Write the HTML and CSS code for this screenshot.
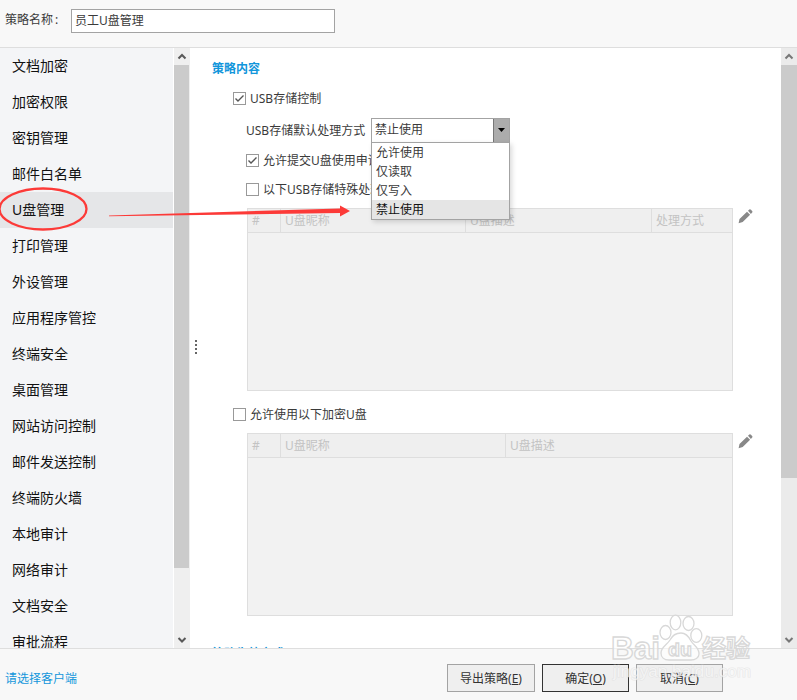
FILE: index.html
```html
<!DOCTYPE html>
<html lang="zh-CN">
<head>
<meta charset="utf-8">
<title>员工U盘管理</title>
<link rel="stylesheet" href="styles.css">
</head>
<body>
<div class="window">
  <header class="topbar">
    <label class="topbar-label" for="name">策略名称<span class="colon">:</span></label>
    <input class="name-input" id="name" type="text" value="员工U盘管理">
  </header>

  <div class="main">
    <nav class="sidebar">
      <div class="nav-item">文档加密</div>
      <div class="nav-item">加密权限</div>
      <div class="nav-item">密钥管理</div>
      <div class="nav-item">邮件白名单</div>
      <div class="nav-item active">U盘管理</div>
      <div class="nav-item">打印管理</div>
      <div class="nav-item">外设管理</div>
      <div class="nav-item">应用程序管控</div>
      <div class="nav-item">终端安全</div>
      <div class="nav-item">桌面管理</div>
      <div class="nav-item">网站访问控制</div>
      <div class="nav-item">邮件发送控制</div>
      <div class="nav-item">终端防火墙</div>
      <div class="nav-item">本地审计</div>
      <div class="nav-item">网络审计</div>
      <div class="nav-item">文档安全</div>
      <div class="nav-item">审批流程</div>
    </nav>
    <div class="scrollbar side-scroll">
      <svg class="arrow" viewBox="0 0 16 17"><path d="M4.5 10.5 8 7l3.5 3.5"/></svg>
      <div class="thumb"></div>
      <svg class="arrow" viewBox="0 0 16 17"><path d="M4.5 7 8 10.5 11.5 7"/></svg>
    </div>
    <div class="splitter"><i></i><i></i><i></i><i></i></div>

    <section class="content">
      <h2 class="title">策略内容</h2>
      <div class="check-row storage"><span class="box"><svg viewBox="0 0 13 13"><path d="M2.5 6.500 5 9l5.500-5.500"/></svg></span><span class="check-text">USB存储控制</span></div>
      <div class="field-row">
        <span class="field-label">USB存储默认处理方式</span>
        <div class="select">
          <div class="select-value">禁止使用</div>
          <div class="select-button"><svg viewBox="0 0 8 4"><path d="M0 0h7L3.500 4z"/></svg></div>
          <div class="menu">
            <div class="option">允许使用</div>
            <div class="option">仅读取</div>
            <div class="option">仅写入</div>
            <div class="option chosen">禁止使用</div>
          </div>
        </div>
      </div>
      <div class="check-row nested apply"><span class="box"><svg viewBox="0 0 13 13"><path d="M2.5 6.500 5 9l5.500-5.500"/></svg></span><span class="check-text">允许提交U盘使用申请</span></div>
      <div class="check-row nested special"><span class="box"></span><span class="check-text">以下USB存储特殊处理</span></div>
      <div class="table-row">
        <div class="table">
          <div class="thead usb-cols"><span>#</span><span>U盘昵称</span><span>U盘描述</span><span>处理方式</span></div>
        </div>
        <svg class="pencil" viewBox="0 0 15 15"><path d="M.6 14.200 1.500 10 9 2.700l3.100 3.100L4.700 13zM10 1.800 11.300.6q.8-.7 1.700.2l1.100 1.100q.8.8 0 1.700L12.900 4.900z"/></svg>
      </div>
      <div class="check-row encrypted"><span class="box"></span><span class="check-text">允许使用以下加密U盘</span></div>
      <div class="table-row">
        <div class="table">
          <div class="thead enc-cols"><span>#</span><span>U盘昵称</span><span>U盘描述</span></div>
        </div>
        <svg class="pencil" viewBox="0 0 15 15"><path d="M.6 14.200 1.500 10 9 2.700l3.100 3.100L4.700 13zM10 1.800 11.300.6q.8-.7 1.700.2l1.100 1.100q.8.8 0 1.700L12.900 4.900z"/></svg>
      </div>
      <h2 class="title next-title">策略生效方式</h2>
    </section>
    <div class="scrollbar main-scroll">
      <svg class="arrow" viewBox="0 0 16 17"><path d="M4.5 10.5 8 7l3.5 3.5"/></svg>
      <div class="thumb"></div>
      <svg class="arrow" viewBox="0 0 16 17"><path d="M4.5 7 8 10.5 11.5 7"/></svg>
    </div>
  </div>

  <footer class="bottombar">
    <a class="client-link">请选择客户端</a>
    <div class="actions">
      <button class="btn export">导出策略(<u>E</u>)</button>
      <button class="btn primary">确定(<u>O</u>)</button>
      <button class="btn">取消(<u>C</u>)</button>
    </div>
  </footer>

  <svg class="annotation" viewBox="0 0 360 60">
    <ellipse cx="43" cy="29" rx="43.5" ry="20.5"/>
    <path d="M109 35.500 340 28.500V25.500L350 31l-10 5.500V33L109 36.300z"/>
  </svg>

  <svg class="watermark" viewBox="0 0 150 76">
    <g class="mark">
      <text x="0" y="46" class="wm-name" textLength="49" lengthAdjust="spacingAndGlyphs">Bai</text>
      <ellipse cx="54.500" cy="19.500" rx="5.500" ry="7"/>
      <ellipse cx="64.500" cy="9.500" rx="5.300" ry="7.300"/>
      <ellipse cx="77.500" cy="10.500" rx="5.500" ry="7"/>
      <ellipse cx="85.300" cy="22.500" rx="5.500" ry="6.800"/>
      <path d="M70 20c5 0 8 4 10 8 3 5 8 6 8 13 0 4-4 6-8 6H58c-5 0-8-3-8-7 0-6 6-8 9-13 2-4 6-7 11-7z"/>
      <text x="57" y="42.500" class="wm-du" textLength="24" lengthAdjust="spacingAndGlyphs">du</text>
      <text x="91" y="44" class="wm-cn" textLength="48" lengthAdjust="spacingAndGlyphs">经验</text>
    </g>
    <text x="2" y="64" class="wm-url" textLength="138" lengthAdjust="spacingAndGlyphs">jingyan.baidu.com</text>
  </svg>
</div>
</body>
</html>
```

FILE: styles.css
```css
* { box-sizing: border-box; }

body {
  margin: 0;
  font: 12px/18px "Noto Sans", "Noto Sans CJK SC", sans-serif;
  color: #3a3a3a;
}

.window {
  position: relative;
  width: 797px;
  height: 700px;
  overflow: hidden;
  display: flex;
  flex-direction: column;
  background: #f8f8f8;
}

.topbar {
  flex: none;
  height: 48px;
  display: flex;
  align-items: flex-start;
  padding: 9px 0 0 5px;
  border-bottom: 1px solid #dedede;
}

.topbar-label { width: 66px; padding-top: 2px; }
.colon { margin-left: 2px; }

.name-input {
  width: 264px;
  height: 24px;
  padding: 0 3px 2px;
  border: 1px solid #a3a3a3;
  background: #fff;
  font: inherit;
  color: #3a3a3a;
}

.main {
  flex: none;
  height: 600px;
  display: flex;
  background: #fff;
  overflow: hidden;
}

.sidebar {
  width: 173px;
  margin-right: 1px;
  overflow: hidden;
  background: #f4f5f7;
  color: #111;
  font-size: 14px;
}

.nav-item { height: 36px; line-height: 36px; padding-left: 12px; }
.nav-item.active { background: #e5e6e8; }

.scrollbar {
  flex: none;
  width: 16px;
  display: flex;
  flex-direction: column;
  background: #efefef;
}

.arrow {
  width: 16px;
  height: 17px;
  fill: none;
  stroke: #585858;
  stroke-width: 2;
}
.arrow:last-child { margin-top: auto; }
.thumb { background: #cbcbcb; }
.side-scroll .thumb { width: 15px; height: 503px; }
.main-scroll { background: #ebebeb; }
.main-scroll .arrow { stroke: #777; }
.main-scroll .thumb { height: 413px; }

.splitter {
  width: 12px;
  display: flex;
  flex-direction: column;
  justify-content: center;
  align-items: center;
  gap: 2px;
  padding-bottom: 2px;
}
.splitter i { width: 2px; height: 2px; background: #666; }

.content { width: 579px; padding: 12px 0 0 10px; overflow: hidden; }

.title { margin: 0; font-size: 12px; line-height: 18px; color: #1296db; }

.check-row {
  height: 18px;
  display: flex;
  align-items: center;
  gap: 4px;
  margin-left: 21px;
}
.check-row.nested { margin-left: 34px; }
.check-text { height: 18px; line-height: 20px; }
.box { width: 13px; height: 13px; border: 1px solid #999; background: #fff; }
.box svg {
  display: block;
  width: 13px;
  height: 13px;
  margin: -1px;
  fill: none;
  stroke: #555;
  stroke-width: 1.4;
}
.storage { margin-top: 11px; }
.apply { margin-top: 9px; }
.special { margin-top: 11px; margin-bottom: 10px; }
.encrypted { margin-top: 14px; margin-bottom: 10px; }

.field-row { display: flex; align-items: center; height: 24px; margin: 11px 0 0 34px; }
.field-label { width: 125px; height: 18px; line-height: 20px; white-space: nowrap; }

.select {
  position: relative;
  width: 139px;
  height: 25px;
  display: flex;
  border: 1px solid #a3a3a3;
  background: #fff;
}
.select-value { flex: 1; padding-left: 3px; line-height: 22px; }
.select-button {
  width: 16px;
  display: flex;
  align-items: center;
  justify-content: center;
  background: #acacac;
  border-left: 1px solid #777;
}
.select-button svg { width: 8px; height: 4px; fill: #000; }

.menu {
  position: absolute;
  z-index: 2;
  left: -1px;
  top: 23px;
  width: 139px;
  height: 78px;
  border: 1px solid #a3a3a3;
  background: #fff;
  box-shadow: 2px 2px 5px rgba(0, 0, 0, .15);
}
.option { height: 19px; line-height: 19px; padding-left: 4px; }
.option.chosen { background: #e5e5e5; color: #111; }

.table-row { display: flex; gap: 5px; margin-left: 35px; }
.table { width: 486px; height: 183px; border: 1px solid #dedede; background: #f2f2f2; }
.thead {
  display: grid;
  height: 24px;
  line-height: 23px;
  border-bottom: 1px solid #dedede;
  background: #efefef;
  color: #c3c3c3;
}
.usb-cols { grid-template-columns: 33px 185px 186px 1fr; }
.enc-cols { grid-template-columns: 33px 225px 1fr; }
.thead span { padding-left: 4px; border-right: 1px solid #dedede; }
.thead span:last-child { border-right: 0; }
.pencil { width: 15px; height: 15px; margin-top: 1px; fill: #888; }
.next-title { margin-top: 29px; }

.bottombar {
  flex: 1;
  display: flex;
  justify-content: space-between;
  padding: 15px 74px 0 5px;
  border-top: 1px solid #dedede;
}
.client-link { padding-top: 6px; color: #1296db; }
.actions { display: flex; gap: 7px; }
.btn {
  width: 87px;
  height: 28px;
  padding: 2px 0 0;
  border: 1px solid #a3a3a3;
  background: #efefef;
  font: inherit;
  color: #333;
}
.btn.export { width: 88px; }
.btn.primary { border-color: #333; }

.annotation {
  position: absolute;
  z-index: 3;
  left: 0;
  top: 180px;
  width: 360px;
  height: 60px;
  pointer-events: none;
}
.annotation ellipse { fill: none; stroke: #fc3a38; stroke-width: 2.3; }
.annotation path { fill: #fc3a38; }

.watermark {
  position: absolute;
  z-index: 3;
  left: 611px;
  top: 613px;
  width: 150px;
  height: 76px;
  overflow: visible;
  pointer-events: none;
}
.mark {
  fill: rgba(255, 255, 255, .6);
  stroke: #d8d8d8;
  stroke-width: 1.3;
  font-weight: 700;
}
.wm-name { font: 700 31px "Liberation Sans", sans-serif; }
.wm-du { font: 700 19px "Liberation Sans", sans-serif; }
.wm-cn { font: 700 24px "Noto Sans CJK SC", sans-serif; }
.wm-url {
  font: 16px "Liberation Sans", sans-serif;
  fill: rgba(255, 255, 255, .6);
  stroke: #cfcfcf;
  stroke-width: 1.2;
  stroke-opacity: .4;
  paint-order: stroke;
}
```
